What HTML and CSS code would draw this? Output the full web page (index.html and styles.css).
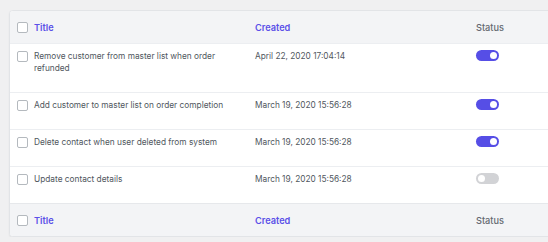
FILE: index.html
```html
<!DOCTYPE html>
<html>
<head>
    <meta charset="UTF-8">
    <title>Automations</title>
    <link rel="stylesheet" href="styles.css">
</head>
<body>
    <div class="card">
        <table class="list-table">
            <thead>
                <tr>
                    <th class="col-title"><div class="cell-title"><span class="check"></span><a>Title</a></div></th>
                    <th class="col-created"><a>Created</a></th>
                    <th class="col-status">Status</th>
                </tr>
            </thead>
            <tbody>
                <tr>
                    <td><div class="cell-title"><span class="check"></span><span>Remove customer from master list when order refunded</span></div></td>
                    <td>April 22, 2020 17:04:14</td>
                    <td><span class="toggle on"></span></td>
                </tr>
                <tr>
                    <td><div class="cell-title"><span class="check"></span><span>Add customer to master list on order completion</span></div></td>
                    <td>March 19, 2020 15:56:28</td>
                    <td><span class="toggle on"></span></td>
                </tr>
                <tr>
                    <td><div class="cell-title"><span class="check"></span><span>Delete contact when user deleted from system</span></div></td>
                    <td>March 19, 2020 15:56:28</td>
                    <td><span class="toggle on"></span></td>
                </tr>
                <tr>
                    <td><div class="cell-title"><span class="check"></span><span>Update contact details</span></div></td>
                    <td>March 19, 2020 15:56:28</td>
                    <td><span class="toggle"></span></td>
                </tr>
            </tbody>
            <tfoot>
                <tr>
                    <th class="col-title"><div class="cell-title"><span class="check"></span><a>Title</a></div></th>
                    <th class="col-created"><a>Created</a></th>
                    <th class="col-status">Status</th>
                </tr>
            </tfoot>
        </table>
    </div>
</body>
</html>
```

FILE: styles.css
```css
html {
    overflow: hidden;
}
body {
    margin: 0;
    padding: 10px 0 0 9px;
    background-color: #f0f0f1;
    color: #50575e;
    font-family: Inter, "Noto Sans", sans-serif;
    font-size: 8.3px;
}
.card {
    width: 580px;
    background-color: #fff;
    border: 1px solid #e2e4e7;
    border-radius: 4px;
    box-shadow: 0 1px 2px rgba(0, 0, 0, 0.06);
    overflow: hidden;
}
.list-table {
    width: 100%;
    border-collapse: collapse;
    table-layout: fixed;
}
.list-table th {
    background-color: #f3f4f6;
    height: 32px;
    padding: 0;
    text-align: left;
    font-weight: 500;
    font-size: 9.2px;
    color: #646970;
    vertical-align: middle;
}
.list-table th a {
    color: #5b50e8;
    font-weight: 600;
}
.list-table td {
    padding: 6px 0 18px 0;
    line-height: 12px;
    vertical-align: top;
    border-top: 1px solid #eceef1;
}
.list-table tfoot th {
    border-top: 1px solid #e6e8eb;
}
.col-title {
    width: 238px;
}
.col-created {
    width: 221px;
}
.list-table td:first-child,
.list-table th:first-child {
    padding-left: 7px;
}
.cell-title {
    display: flex;
    align-items: flex-start;
    gap: 6px;
    padding-right: 24px;
}
th .cell-title {
    align-items: center;
}
.check {
    flex: none;
    width: 9px;
    height: 9px;
    border: 1px solid #b4b9be;
    border-radius: 2px;
    background-color: #fff;
}
td .check {
    margin-top: 1px;
}
.toggle {
    display: inline-block;
    position: relative;
    width: 23px;
    height: 11px;
    border-radius: 6px;
    background-color: #d2d3d6;
    vertical-align: top;
}
.toggle::after {
    content: "";
    position: absolute;
    top: 2px;
    left: 2px;
    width: 7px;
    height: 7px;
    border-radius: 50%;
    background-color: #fff;
}
.toggle.on {
    background-color: #564ee6;
}
.toggle.on::after {
    left: 14px;
}
```
